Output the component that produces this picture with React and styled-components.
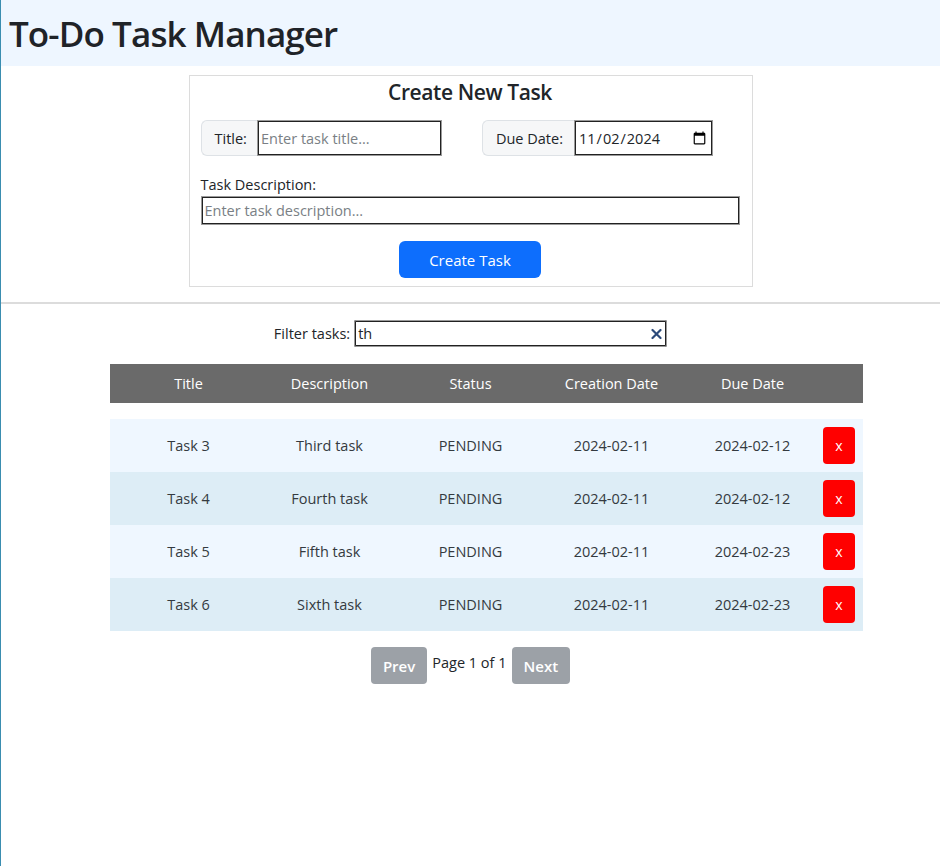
import React from "react";
import styled, { createGlobalStyle } from "styled-components";

const Global = createGlobalStyle`
  html, body { margin: 0; padding: 0; background: #fff; }
  body {
    font-family: "Open Sans", "Noto Sans", sans-serif;
    color: #212529;
    font-size: 14.5px;
  }
  * { box-sizing: border-box; }
`;

const Page = styled.div`
  min-height: 866px;
  border-left: 1px solid #3a8db0;
`;

const Header = styled.header`
  background: #eef6ff;
  height: 66px;
  display: flex;
  align-items: center;
  padding-left: 8px;
`;

const AppTitle = styled.h1`
  margin: 0;
  font-size: 35px;
  font-weight: 600;
  letter-spacing: -0.9px;
  color: #1f2328;
`;

const Card = styled.section`
  width: 564px;
  margin: 9px auto 0;
  border: 1px solid #dcdcdc;
  padding: 2px 12px 8px 11px;
  display: flex;
  flex-direction: column;
`;

const CardTitle = styled.h2`
  margin: 0 0 14px;
  text-align: center;
  font-size: 21px;
  font-weight: 600;
  letter-spacing: -0.4px;
  line-height: 28px;
`;

const Row = styled.div`
  display: flex;
  gap: 40px;
`;

const Group = styled.div`
  display: flex;
  height: 36px;
`;

const GroupLabel = styled.span`
  display: flex;
  align-items: center;
  padding: 0 ${(p) => p.$pr || 10}px 0 13px;
  background: #f6f7f8;
  border: 1px solid #dee2e6;
  border-right: none;
  border-radius: 6px 0 0 6px;
  font-size: 14.5px;
`;

const TextInput = styled.input`
  width: ${(p) => p.$w}px;
  height: 100%;
  border: 2px solid #222;
  outline: 1px solid #9a9a9a;
  outline-offset: -1px;
  padding: 0 2px;
  font: inherit;
  font-size: 14.5px;
  color: #212529;
  background: #fff;
  &::placeholder { color: #7a7f85; }
`;

const DescLabel = styled.label`
  display: block;
  margin-top: 19px;
  margin-bottom: 1px;
  font-size: 14.5px;
  line-height: 20px;
`;

const DescInput = styled(TextInput)`
  width: 100%;
  height: 29px;
`;

const Center = styled.div`
  display: flex;
  justify-content: center;
  align-items: center;
`;

const PrimaryButton = styled.button`
  margin-top: 16px;
  width: 142px;
  height: 37px;
  background: #0d6efd;
  color: #fff;
  border: none;
  border-radius: 6px;
  font: inherit;
  font-size: 15px;
`;

const Divider = styled.hr`
  margin: 15px 0 0;
  border: none;
  border-top: 2px solid #dcdcdc;
`;

const FilterRow = styled(Center)`
  margin-top: 16px;
  gap: 4px;
`;

const FilterBox = styled.div`
  position: relative;
  width: 313px;
  height: 27px;
`;

const FilterInput = styled(TextInput)`
  width: 100%;
  border-radius: 2px;
`;

const ClearMark = styled.span`
  position: absolute;
  right: 5px;
  top: 50%;
  transform: translateY(-50%);
  display: flex;
`;

const Table = styled.div`
  width: 753px;
  margin: 17px 0 0 109px;
`;

const HeadRow = styled.div`
  display: grid;
  grid-template-columns: repeat(5, 141px) 1fr;
  padding-left: 8px;
  height: 39px;
  align-items: center;
  background: #6a6a6a;
  color: #fff;
  font-size: 14.5px;
  margin-bottom: 16px;
`;

const BodyRow = styled.div`
  display: grid;
  grid-template-columns: repeat(5, 141px) 1fr;
  padding-left: 8px;
  height: 53px;
  align-items: center;
  background: ${(p) => (p.$odd ? "#ddedf6" : "#eff7ff")};
  color: #343a40;
`;

const Cell = styled.div`
  text-align: center;
`;

const DeleteButton = styled.button`
  width: 32px;
  height: 37px;
  background: #ff0000;
  color: #fff;
  border: none;
  border-radius: 4px;
  font: inherit;
  font-size: 14px;
  padding: 0;
`;

const Pager = styled(Center)`
  margin-top: 16px;
  gap: 5px;
`;

const PagerButton = styled.button`
  height: 37px;
  padding: 0 12px;
  background: #9ca1a7;
  color: #fff;
  border: none;
  border-radius: 4px;
  font: inherit;
  font-size: 15px;
  font-weight: 600;
`;

const PageText = styled.span`
  margin-top: -6px;
`;

const tasks = [
  ["Task 3", "Third task", "PENDING", "2024-02-11", "2024-02-12"],
  ["Task 4", "Fourth task", "PENDING", "2024-02-11", "2024-02-12"],
  ["Task 5", "Fifth task", "PENDING", "2024-02-11", "2024-02-23"],
  ["Task 6", "Sixth task", "PENDING", "2024-02-11", "2024-02-23"],
];

export default function App() {
  return (
    <Page>
      <Global />
      <Header>
        <AppTitle>To-Do Task Manager</AppTitle>
      </Header>
      <Card>
        <CardTitle>Create New Task</CardTitle>
        <Row>
          <Group>
            <GroupLabel>Title:</GroupLabel>
            <TextInput $w={185} placeholder="Enter task title..." />
          </Group>
          <Group>
            <GroupLabel $pr={11}>Due Date:</GroupLabel>
            <TextInput $w={139} type="date" defaultValue="2024-11-02" />
          </Group>
        </Row>
        <DescLabel>Task Description:</DescLabel>
        <DescInput placeholder="Enter task description..." />
        <Center>
          <PrimaryButton>Create Task</PrimaryButton>
        </Center>
      </Card>
      <Divider />
      <FilterRow>
        <span>Filter tasks:</span>
        <FilterBox>
          <FilterInput defaultValue="th" />
          <ClearMark>
            <svg width="11" height="11" viewBox="0 0 11 11">
              <path d="M1.5 1.5L9.5 9.5M9.5 1.5L1.5 9.5" stroke="#2b4a7a" strokeWidth="2.2" strokeLinecap="round" />
            </svg>
          </ClearMark>
        </FilterBox>
      </FilterRow>
      <Table>
        <HeadRow>
          <Cell>Title</Cell>
          <Cell>Description</Cell>
          <Cell>Status</Cell>
          <Cell>Creation Date</Cell>
          <Cell>Due Date</Cell>
          <span />
        </HeadRow>
        {tasks.map((t, i) => (
          <BodyRow key={t[0]} $odd={i % 2 === 1}>
            {t.map((v) => (
              <Cell key={v}>{v}</Cell>
            ))}
            <div>
              <DeleteButton>x</DeleteButton>
            </div>
          </BodyRow>
        ))}
      </Table>
      <Pager>
        <PagerButton>Prev</PagerButton>
        <PageText>Page 1 of 1</PageText>
        <PagerButton>Next</PagerButton>
      </Pager>
    </Page>
  );
}
